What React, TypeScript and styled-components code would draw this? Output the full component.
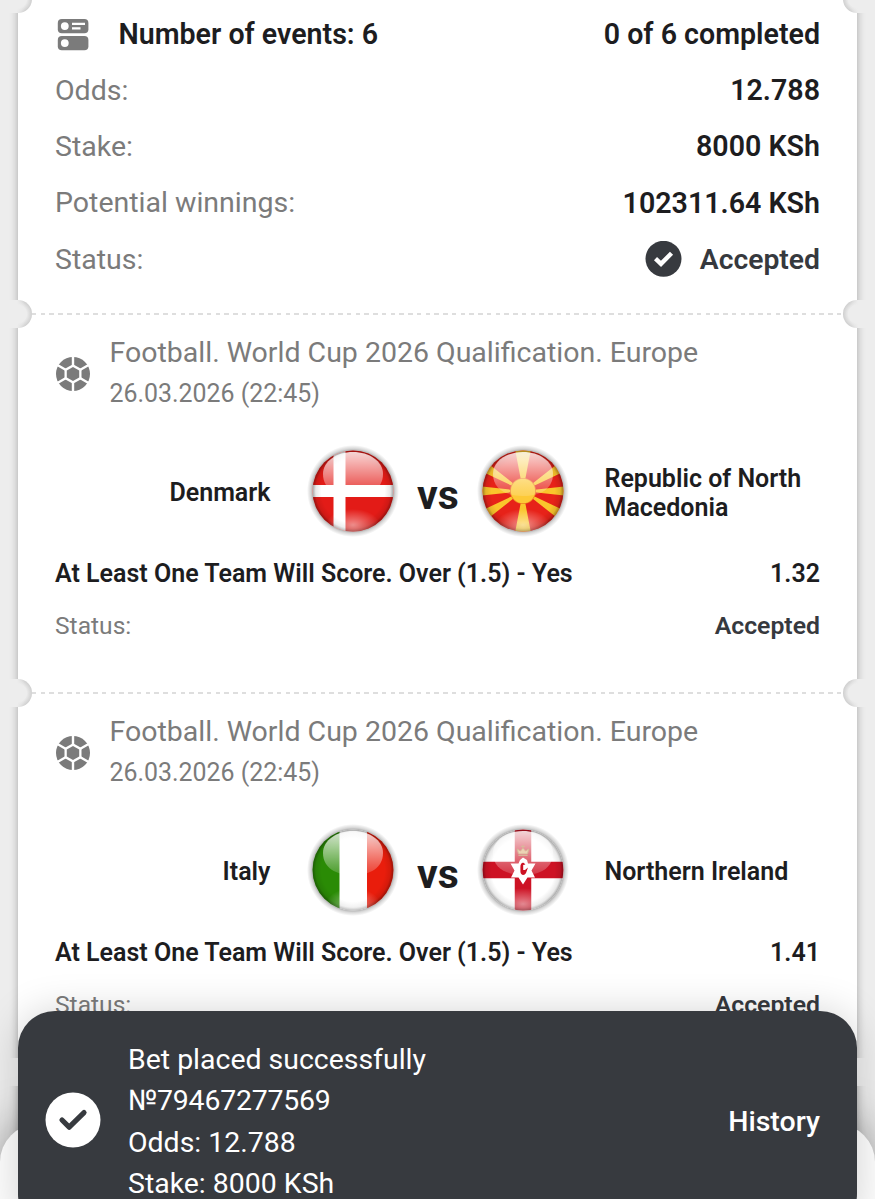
import React, { useId } from "react";
import styled, { createGlobalStyle } from "styled-components";

const GlobalStyle = createGlobalStyle`
  * { box-sizing: border-box; }
  html, body { margin: 0; padding: 0; background: #ededed; overflow: hidden; }
  body { font-family: Roboto, "Liberation Sans", sans-serif; color: #1d1d1f; }
`;

const Screen = styled.div`
  position: relative;
  width: 875px;
  height: 1199px;
  overflow: hidden;
  background: #ededed;
`;

const Ticket = styled.main`
  width: 839px;
  margin: 0 auto 0 18px;
  display: flex;
  flex-direction: column;
  background: #fff;
  box-shadow: 0 0 8px rgba(0, 0, 0, 0.3);
`;

const Section = styled.section<{ $height: number; $top: number }>`
  position: relative;
  height: ${(p) => p.$height}px;
  padding: ${(p) => p.$top}px 37px 0;
`;

const Notch = styled.span<{ $side: "left" | "right"; $y: number }>`
  position: absolute;
  top: ${(p) => p.$y - 14}px;
  ${(p) => p.$side}: -12px;
  width: 26px;
  height: 28px;
  background:
    linear-gradient(${(p) => (p.$side === "left" ? "90deg" : "270deg")}, #ededed 11px, rgba(237, 237, 237, 0) 19px),
    radial-gradient(circle 14px at ${(p) => (p.$side === "left" ? "12px" : "14px")} 14px, #ededed 62%, #cfcfcf 100%);
  border-radius: ${(p) => (p.$side === "left" ? "0 14px 14px 0" : "14px 0 0 14px")};
`;

const Perforation = styled.span<{ $y: number }>`
  position: absolute;
  top: ${(p) => p.$y - 1}px;
  left: 14px;
  right: 14px;
  height: 2px;
  background: repeating-linear-gradient(90deg, #dedede 0 4.5px, transparent 4.5px 8.75px);
`;

const SummaryRow = styled.div`
  display: flex;
  align-items: center;
  justify-content: space-between;
  height: 56.4px;
  white-space: nowrap;
`;

const Label = styled.span`
  font-size: 28.5px;
  color: #7b7b7b;
`;

const Value = styled.span<{ $dark?: boolean }>`
  display: flex;
  align-items: center;
  gap: 18px;
  font-size: ${(p) => (p.$dark ? "28.3px" : "28.6px")};
  font-weight: 600;
  color: ${(p) => (p.$dark ? "#36393e" : "#1d1d1f")};
`;

const EventCount = styled(Value)`
  gap: 27.5px;
`;

const EventHeader = styled.header`
  display: flex;
  align-items: center;
  gap: 18.5px;
  height: 81px;
  white-space: nowrap;
  color: #7b7b7b;
`;

const League = styled.div`
  font-size: 28.5px;
  line-height: 40px;
`;

const Kickoff = styled.div`
  font-size: 24.9px;
  line-height: 41px;
`;

const Match = styled.div`
  display: grid;
  grid-template-columns: 256px 84px 86px 84px 1fr;
  align-items: center;
  height: 100px;
  margin-top: 27px;
`;

const Team = styled.div<{ $home?: boolean }>`
  font-size: 25px;
  line-height: 29px;
  font-weight: 600;
  text-align: ${(p) => (p.$home ? "right" : "left")};
  padding: ${(p) => (p.$home ? "3px 40.5px 0 0" : "3px 0 0 39.5px")};
`;

const Versus = styled.div`
  font-size: 41px;
  line-height: 46px;
  padding-top: 8px;
  font-weight: 700;
  text-align: center;
`;

const BetRow = styled.div<{ $height: number }>`
  display: flex;
  align-items: center;
  justify-content: space-between;
  height: ${(p) => p.$height}px;
  font-size: 25px;
  font-weight: 600;
  white-space: nowrap;
`;

const StatusLabel = styled.span`
  font-size: 24.6px;
  color: #7b7b7b;
  font-weight: 400;
`;

const StatusValue = styled.span`
  font-size: 24.8px;
  color: #36393e;
`;

const Sheet = styled.div`
  position: absolute;
  left: 0;
  right: 0;
  top: 1124px;
  height: 120px;
  border-radius: 38px;
  background: #fcfcfc;
  box-shadow: 0 0 48px rgba(0, 0, 0, 0.36);
`;

const Toast = styled.aside`
  position: absolute;
  left: 18px;
  top: 1011px;
  width: 839px;
  height: 220px;
  display: flex;
  align-items: flex-start;
  padding: 28px 37px 0 27px;
  border-radius: 37px;
  background: #373a3f;
  color: #fff;
  box-shadow: 0 0 38px rgba(0, 0, 0, 0.17);
`;

const ToastIcon = styled.div`
  height: 55px;
  margin: 53px 27px 0 0;
`;

const ToastText = styled.div`
  flex: 1;
  font-size: 28.45px;
  line-height: 41.3px;
  white-space: nowrap;
`;

const TicketNumber = styled.div`
  letter-spacing: -0.2px;
`;

const HistoryButton = styled.button`
  margin: 65px 0 0;
  padding: 0;
  border: 0;
  background: none;
  color: #fff;
  font: 500 28.5px/36px Roboto, sans-serif;
`;

const FlagSvg = styled.svg`
  display: block;
  margin: -6px;
  overflow: visible;
`;

const EventsIcon = () => (
  <svg width="36" height="34" viewBox="0 0 36 34">
    <rect x="2.8" y="2" width="30.6" height="14.2" rx="4" fill="#7b7b7b" />
    <rect x="2.8" y="19" width="30.6" height="14.2" rx="4" fill="#7b7b7b" />
    <circle cx="9.8" cy="9.1" r="3.9" fill="#fff" />
    <circle cx="9.8" cy="26.1" r="3.9" fill="#fff" />
    <path d="M17 6.8H30M17 11.4H25.5" stroke="#fff" strokeWidth="2.3" />
  </svg>
);

const BallIcon = () => (
  <svg width="36" height="36" viewBox="-18 -18 36 36">
    <circle r="17" fill="#7b7b7b" />
    <path
      d="M0 -18V-8M0 18V8M-7.4 -4.3L-16 -9.2M7.4 -4.3L16 -9.2M-7.4 4.3L-16 9.2M7.4 4.3L16 9.2"
      fill="none"
      stroke="#fff"
      strokeWidth="2.4"
    />
    <path d="M0 -9.8L8.5 -4.9V4.9L0 9.8L-8.5 4.9V-4.9Z" fill="#fff" />
    <path d="M0 -7L6.2 -3.5V3.5L0 7L-6.2 3.5V-3.5Z" fill="#7b7b7b" />
  </svg>
);

const AcceptedIcon = () => (
  <svg width="37" height="37" viewBox="0 0 37 37">
    <circle cx="18.5" cy="17.8" r="18" fill="#373a3f" />
    <path d="M10.5 17.6L16 22.9L26.5 12.3" fill="none" stroke="#fff" strokeWidth="4.4" />
  </svg>
);

const PlacedIcon = () => (
  <svg width="56" height="56" viewBox="0 0 56 56">
    <circle cx="28" cy="28" r="27.5" fill="#fff" />
    <path d="M17 28L24.2 35.2L39 20.6" fill="none" stroke="#373a3f" strokeWidth="5.2" strokeLinecap="round" strokeLinejoin="round" />
  </svg>
);

type Country = "denmark" | "macedonia" | "italy" | "ulster";

const flagArt: Record<Country, React.ReactNode> = {
  denmark: (
    <>
      <rect x="-42" y="-42" width="84" height="84" fill="#e31b17" />
      <path d="M-13.5 -42V42M-42 0H42" stroke="#fff" strokeWidth="12" />
    </>
  ),
  macedonia: (
    <>
      <rect x="-42" y="-42" width="84" height="84" fill="#e72219" />
      <path
        d="M-8 -42H8L0 0ZM-8 42H8L0 0ZM-42 -4.5V4.5L0 0ZM42 -4.5V4.5L0 0ZM-38 -18L-33 -26L0 0ZM38 -18L33 -26L0 0ZM-38 18L-33 26L0 0ZM38 18L33 26L0 0Z"
        fill="#fac52c"
      />
      <circle r="13" fill="#ee7a22" />
      <circle r="12.2" fill="#fdc936" />
    </>
  ),
  italy: (
    <>
      <rect x="-42" y="-42" width="29" height="84" fill="#2a8b05" />
      <rect x="-13.5" y="-42" width="28" height="84" fill="#fff" />
      <rect x="14" y="-42" width="28" height="84" fill="#e91d0c" />
    </>
  ),
  ulster: (
    <>
      <rect x="-42" y="-42" width="84" height="84" fill="#fff" />
      <path d="M0 -42V42M-42 0H42" stroke="#cd1224" strokeWidth="16.5" />
    </>
  ),
};

const Flag = ({ country }: { country: Country }) => {
  const id = useId();
  const ulster = country === "ulster";
  return (
    <FlagSvg width="96" height="96" viewBox="-48 -48 96 96">
      <defs>
        <clipPath id={id + "clip"}><circle r="40.5" /></clipPath>
        <radialGradient id={id + "edge"}>
          <stop offset="0.78" stopColor="#000" stopOpacity="0" />
          <stop offset="0.92" stopColor="#000" stopOpacity="0.09" />
          <stop offset="1" stopColor="#000" stopOpacity="0.36" />
        </radialGradient>
        <linearGradient id={id + "gloss"} x1="0" y1="0" x2="0" y2="1">
          <stop offset="0" stopColor="#fff" stopOpacity="0.82" />
          <stop offset="0.75" stopColor="#fff" stopOpacity="0.3" />
          <stop offset="1" stopColor="#fff" stopOpacity="0.15" />
        </linearGradient>
        <radialGradient id={id + "glow"}>
          <stop offset="0" stopColor="#fff" stopOpacity="0.5" />
          <stop offset="1" stopColor="#fff" stopOpacity="0" />
        </radialGradient>
        <radialGradient id={id + "halo"}>
          <stop offset="0.84" stopColor="#000" stopOpacity="0.45" />
          <stop offset="0.92" stopColor="#000" stopOpacity="0.16" />
          <stop offset="1" stopColor="#000" stopOpacity="0" />
        </radialGradient>
      </defs>
      <circle r="46" fill={`url(#${id}halo)`} />
      <g clipPath={`url(#${id}clip)`}>
        {flagArt[country]}
        <circle r="40.5" fill={`url(#${id}edge)`} />
        <ellipse cx="0" cy="34" rx="27" ry="16" fill={`url(#${id}glow)`} />
        <path d="M-30 -17C-30 -30 -16 -39 0 -39S30 -30 30 -17C30 -2 17 5 0 5S-30 -2 -30 -17Z" fill={`url(#${id}gloss)`} />
        {ulster && (
          <>
            <path
              d="M-4.6 -14.5H4.6M-4.5 -16L-5.8 -21L-2.5 -19L0 -22L2.5 -19L5.8 -21L4.5 -16ZM0 -22V-25M-2 -23.5H2"
              fill="#ecd3b4"
              stroke="#d8b69a"
              strokeWidth="1"
            />
            <path d="M-3 -10L0 -12.5L4 -10L5 -6.5H12.5L8.5 0.5L12 7.5H4.5L0 14.5L-4.5 7.5H-12L-8.5 0.5L-12.5 -6.5H-4.5Z" fill="#fff" />
            <path d="M2.4 -5.5C0 -9 -2.6 -7 -2.6 -3V1.5C-2.6 5.5 1.6 6 3 3L5 -2.5L2 0H0.2V-5Z" fill="#cd1224" />
          </>
        )}
      </g>
    </FlagSvg>
  );
};

const Divider = ({ y }: { y: number }) => (
  <>
    <Perforation $y={y} />
    <Notch $side="left" $y={y} />
    <Notch $side="right" $y={y} />
  </>
);

interface EventProps {
  home: string;
  away: string;
  homeFlag: Country;
  awayFlag: Country;
  odds: string;
}

const EventCard = ({ home, away, homeFlag, awayFlag, odds }: EventProps) => (
  <Section $height={379} $top={19.5}>
    <Divider y={0} />
    <EventHeader>
      <BallIcon />
      <div>
        <League>Football. World Cup 2026 Qualification. Europe</League>
        <Kickoff>26.03.2026 (22:45)</Kickoff>
      </div>
    </EventHeader>
    <Match>
      <Team $home>{home}</Team>
      <Flag country={homeFlag} />
      <Versus>vs</Versus>
      <Flag country={awayFlag} />
      <Team>{away}</Team>
    </Match>
    <BetRow $height={65}>
      <span>At Least One Team Will Score. Over (1.5) - Yes</span>
      <span>{odds}</span>
    </BetRow>
    <BetRow $height={38}>
      <StatusLabel>Status:</StatusLabel>
      <StatusValue>Accepted</StatusValue>
    </BetRow>
  </Section>
);

export default function App() {
  return (
    <Screen>
      <GlobalStyle />
      <Ticket>
        <Section $height={313.5} $top={5.5}>
          <Divider y={-1} />
          <SummaryRow>
            <EventCount><EventsIcon />Number of events: 6</EventCount>
            <Value>0 of 6 completed</Value>
          </SummaryRow>
          <SummaryRow><Label>Odds:</Label><Value>12.788</Value></SummaryRow>
          <SummaryRow><Label>Stake:</Label><Value>8000 KSh</Value></SummaryRow>
          <SummaryRow><Label>Potential winnings:</Label><Value>102311.64 KSh</Value></SummaryRow>
          <SummaryRow><Label>Status:</Label><Value $dark><AcceptedIcon />Accepted</Value></SummaryRow>
        </Section>
        <EventCard home="Denmark" away="Republic of North Macedonia" homeFlag="denmark" awayFlag="macedonia" odds="1.32" />
        <EventCard home="Italy" away="Northern Ireland" homeFlag="italy" awayFlag="ulster" odds="1.41" />
        <Section $height={160} $top={0}><Divider y={0} /></Section>
      </Ticket>
      <Sheet />
      <Toast>
        <ToastIcon><PlacedIcon /></ToastIcon>
        <ToastText>
          <div>Bet placed successfully</div>
          <TicketNumber>№79467277569</TicketNumber>
          <div>Odds: 12.788</div>
          <div>Stake: 8000 KSh</div>
        </ToastText>
        <HistoryButton>History</HistoryButton>
      </Toast>
    </Screen>
  );
}
